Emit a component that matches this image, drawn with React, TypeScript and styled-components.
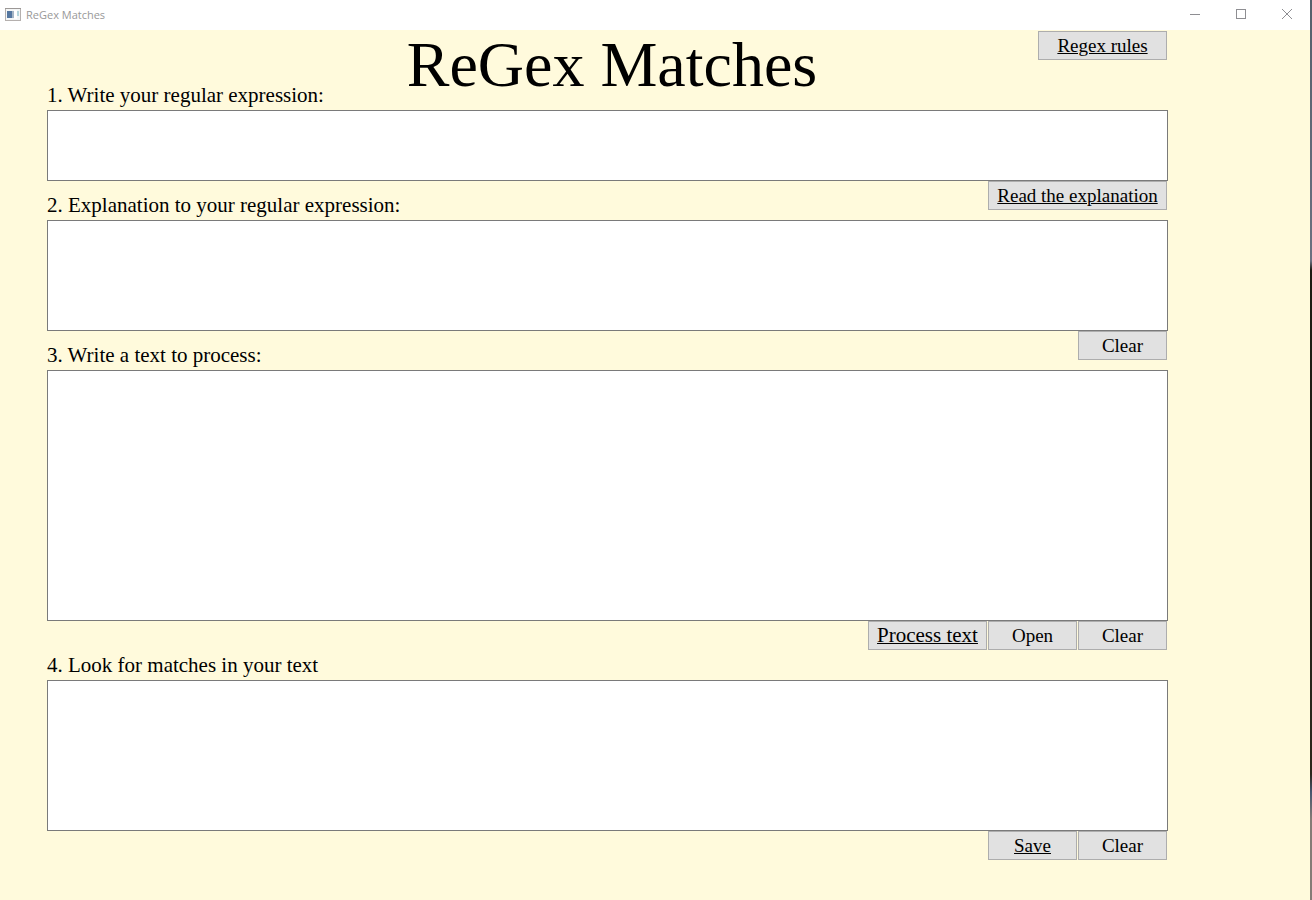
import React from "react";
import styled, { createGlobalStyle } from "styled-components";

const GlobalStyle = createGlobalStyle`
  * { box-sizing: border-box; }
  body { margin: 0; background: #fffadc; }
`;

const Desktop = styled.div`
  display: flex;
  min-height: 100vh;
  font-family: "Liberation Serif", "Times New Roman", serif;
  color: #000;
`;

const Window = styled.div`
  flex: 1;
  min-width: 0;
  background: #fffadc;
`;

const DesktopEdge = styled.div`
  width: 2px;
  background: linear-gradient(
    to bottom,
    #55606c 0%,
    #6c7080 29%,
    #1c1a12 30%,
    #2c271c 86%,
    #46566e 88%,
    #857c76 91%,
    #857c76 100%
  );
`;

const TitleBar = styled.header`
  display: flex;
  align-items: center;
  height: 30px;
  padding-left: 5px;
  background: #fff;
`;

const AppIcon = styled.svg`
  width: 16px;
  height: 14px;
`;

const WindowName = styled.span`
  flex: 1;
  padding-left: 5px;
  font: 11px/16px "Open Sans", "Noto Sans", sans-serif;
  color: #999;
`;

const WindowButton = styled.button`
  display: flex;
  align-items: center;
  justify-content: center;
  width: 46px;
  height: 30px;
  padding: 0 0 2px;
  border: 0;
  background: transparent;
  color: #8e8e92;
`;

const Form = styled.main`
  padding: 0 142px 40px 47px;
`;

const Top = styled.div`
  display: grid;
  grid-template-columns: 1fr auto 1fr;
  height: 50px;
  padding: 1px 1px 0 10px;
`;

const Heading = styled.h1`
  grid-column: 2;
  margin: 0;
  font-size: 64px;
  font-weight: 400;
  line-height: 68px;
  white-space: nowrap;
`;

const Section = styled.section<{ $tight?: boolean }>`
  margin-bottom: ${(p) => (p.$tight ? "-20px" : "0")};
`;

const Label = styled.label`
  display: block;
  width: fit-content;
  font-size: 21px;
  line-height: 30px;
`;

const TextBox = styled.textarea<{ $height: number }>`
  display: block;
  width: 100%;
  height: ${(p) => p.$height}px;
  padding: 4px;
  border: 1px solid #7a7a7a;
  border-radius: 0;
  outline: 0;
  background: #fff;
  font: inherit;
  font-size: 19px;
  resize: none;
`;

const Actions = styled.div`
  display: flex;
  justify-content: flex-end;
  gap: 1px;
  padding-right: 1px;
`;

const widths = { small: 89, medium: 119, large: 129, wide: 179 };

const ActionButton = styled.button<{
  $size?: keyof typeof widths;
  $underline?: boolean;
  $big?: boolean;
}>`
  justify-self: end;
  width: ${(p) => widths[p.$size ?? "small"]}px;
  height: 29px;
  padding: 0;
  border: 1px solid #adadad;
  background: #e1e1e1;
  color: #000;
  font-family: inherit;
  font-size: ${(p) => (p.$big ? 21 : 19)}px;
  line-height: 27px;
  text-decoration: ${(p) => (p.$underline ? "underline" : "none")};
  text-decoration-thickness: 1px;
  white-space: nowrap;
`;

export default function App() {
  return (
    <Desktop>
      <GlobalStyle />
      <Window>
        <TitleBar>
          <AppIcon viewBox="0 0 16 14" aria-hidden="true">
            <rect x="0.5" y="0.5" width="15" height="12" fill="#f4f6f6" stroke="#b5b0ae" />
            <path d="M0 0.5H16" stroke="#9c9896" />
            <rect x="2" y="3" width="5" height="7" fill="#5577a0" />
            <rect x="7" y="3" width="2" height="7" fill="#a5b5c5" />
            <rect x="9" y="2" width="3" height="9" fill="#fff" />
            <rect x="12" y="3" width="2" height="5" fill="#b5d5dc" />
          </AppIcon>
          <WindowName>ReGex Matches</WindowName>
          <WindowButton type="button" aria-label="Minimize">
            <svg width="10" height="10" shapeRendering="crispEdges">
              <path d="M0 5.5H10" stroke="currentColor" />
            </svg>
          </WindowButton>
          <WindowButton type="button" aria-label="Maximize">
            <svg width="10" height="10" shapeRendering="crispEdges">
              <rect x="0.5" y="0.5" width="9" height="9" fill="none" stroke="currentColor" />
            </svg>
          </WindowButton>
          <WindowButton type="button" aria-label="Close">
            <svg width="10" height="10">
              <path d="M0 0L10 10M10 0L0 10" stroke="currentColor" />
            </svg>
          </WindowButton>
        </TitleBar>
        <Form>
          <Top>
            <Heading>ReGex Matches</Heading>
            <ActionButton type="button" $size="large" $underline>Regex rules</ActionButton>
          </Top>
          <Section $tight>
            <Label htmlFor="expression">1. Write your regular expression:</Label>
            <TextBox id="expression" $height={71} />
            <Actions>
              <ActionButton type="button" $size="wide" $underline>Read the explanation</ActionButton>
            </Actions>
          </Section>
          <Section $tight>
            <Label htmlFor="explanation">2. Explanation to your regular expression:</Label>
            <TextBox id="explanation" $height={111} readOnly />
            <Actions>
              <ActionButton type="button">Clear</ActionButton>
            </Actions>
          </Section>
          <Section>
            <Label htmlFor="source">3. Write a text to process:</Label>
            <TextBox id="source" $height={251} />
            <Actions>
              <ActionButton type="button" $size="medium" $underline $big>Process text</ActionButton>
              <ActionButton type="button">Open</ActionButton>
              <ActionButton type="button">Clear</ActionButton>
            </Actions>
          </Section>
          <Section>
            <Label htmlFor="matches">4. Look for matches in your text</Label>
            <TextBox id="matches" $height={151} readOnly />
            <Actions>
              <ActionButton type="button" $underline>Save</ActionButton>
              <ActionButton type="button">Clear</ActionButton>
            </Actions>
          </Section>
        </Form>
      </Window>
      <DesktopEdge />
    </Desktop>
  );
}
